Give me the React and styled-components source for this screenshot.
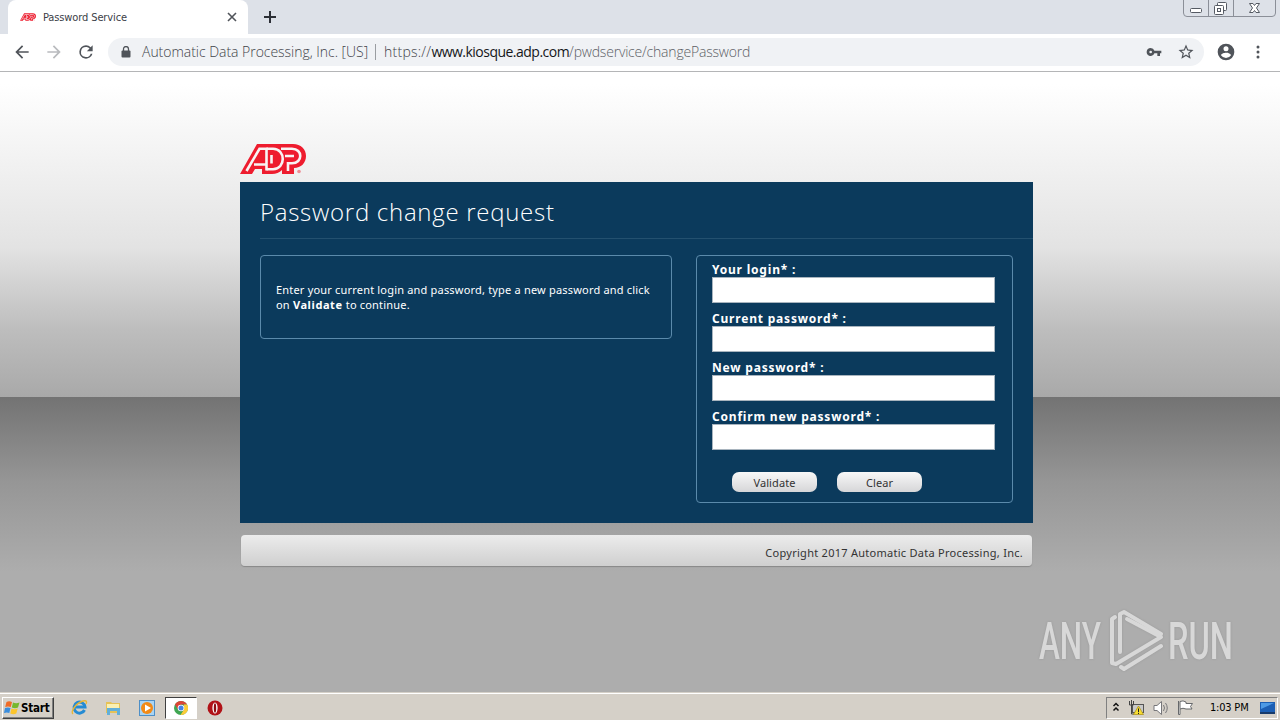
import React, { useState } from "react";
import styled, { createGlobalStyle } from "styled-components";

const GlobalStyle = createGlobalStyle`
  * {
    box-sizing: border-box;
  }
  body {
    margin: 0;
    overflow: hidden;
    font-family: "Noto Sans", "Open Sans", sans-serif;
  }
`;

const AdpLogo = ({ width, height }) => (
  <svg width={width} height={height} viewBox="0 0 66 30" fill="none">
    <path
      d="M17 0H53C61 0 66 5 66 12C66 19 61 24 54 24V30H42V26Q38 30 32 30H22V25H15L12 30H0Z"
      fill="#ee1c2e"
    />
    <g stroke="#f8f4f4" strokeWidth="2.600">
      <path d="M6.500 27L19.500 4.800H26.500V26.500M14 20.500H26.500" />
      <path d="M26.500 4.800H33C46 4.800 46 25.200 33 25.200H26.500" />
      <path d="M31.500 11V19.500" />
      <path d="M41 4.800H52C63 4.800 63 19.200 52 19.200H48V27M45 12H54" />
    </g>
    <circle cx="59" cy="27.500" r="1.800" fill="#ee8d94" />
  </svg>
);

const WindowButtons = () => (
  <svg width="94" height="17" viewBox="0 0 94 17" fill="none">
    <path
      d="M.5 0V13Q.5 16.500 4 16.500H89Q92.500 16.500 92.500 13V0M25.500 0V16M50.500 0V16"
      stroke="#8b8f98"
    />
    <rect x="7.500" y="8.500" width="11" height="4" rx="1" fill="#fff" stroke="#555a63" />
    <rect x="34.500" y="2.500" width="9" height="8" rx="1" fill="#fff" stroke="#555a63" />
    <rect x="31.500" y="5.500" width="9" height="9" rx="1" fill="#fff" stroke="#555a63" />
    <rect x="34.500" y="8.500" width="3" height="3" stroke="#555a63" />
    <path
      d="M66.500 3.500H70L71.500 5.500L73 3.500H76.500L73.500 8L76.500 12.500H73L71.500 10.500L70 12.500H66.500L69.500 8Z"
      fill="#fff"
      stroke="#555a63"
    />
  </svg>
);

const AnyRunMark = () => (
  <svg width="240" height="64" viewBox="0 0 240 64" fill="none">
    <g fill="#d8d8d8" fontFamily="Roboto, sans-serif" fontSize="51" fontWeight="500">
      <text x="1" y="50" textLength="62" lengthAdjust="spacingAndGlyphs">
        ANY
      </text>
      <text x="130" y="50" textLength="65" lengthAdjust="spacingAndGlyphs">
        RUN
      </text>
    </g>
    <g stroke="#d8d8d8" strokeWidth="4" strokeLinejoin="round" strokeLinecap="round">
      <path d="M77 8L74 10V54L78 55L123 28L89 10" />
      <path d="M82 43V5L86 3L123 25" />
      <path d="M83 58L86 60L123 37" />
    </g>
  </svg>
);

const App = () => {
  const [values, setValues] = useState({});
  const handleChange = (e) => {
    setValues({ ...values, [e.target.name]: e.target.value });
  };
  const handleClear = () => {
    setValues({});
  };

  return (
    <Screen>
      <GlobalStyle />
      <TabStrip>
        <Tab>
          <AdpLogo width={16} height={8} />
          <TabTitle>Password Service</TabTitle>
          <svg width="10" height="10" viewBox="0 0 10 10">
            <path d="M1 1L9 9M9 1L1 9" stroke="#50545a" strokeWidth="1.600" />
          </svg>
        </Tab>
        <NewTab>
          <svg width="12" height="12" viewBox="0 0 12 12">
            <path d="M6 0V12M0 6H12" stroke="#2c2f36" strokeWidth="2" />
          </svg>
        </NewTab>
        <WindowButtons />
      </TabStrip>

      <Toolbar>
        <NavIcon viewBox="0 0 24 24" color="#50545a">
          <path d="M20 11H7.830l5.590-5.590L12 4l-8 8 8 8 1.410-1.410L7.830 13H20v-2z" />
        </NavIcon>
        <NavIcon viewBox="0 0 24 24" color="#b9bbbe">
          <path d="M12 4l-1.410 1.410L16.170 11H4v2h12.170l-5.580 5.590L12 20l8-8z" />
        </NavIcon>
        <NavIcon viewBox="0 0 24 24" color="#50545a">
          <path d="M17.650 6.350A7.950 7.950 0 0 0 12 4a8 8 0 1 0 7.730 10h-2.080A6 6 0 1 1 12 6c1.660 0 3.140.690 4.220 1.780L13 11h7V4l-2.350 2.350z" />
        </NavIcon>
        <AddressBar>
          <svg width="10" height="12" viewBox="0 0 10 12">
            <rect x="0.500" y="4.500" width="9" height="7" rx="1" fill="#50545a" />
            <path d="M2.500 5V3a2.500 2.500 0 0 1 5 0V5" fill="none" stroke="#50545a" strokeWidth="1.300" />
          </svg>
          <Owner>Automatic Data Processing, Inc. [US]</Owner>
          <Separator />
          <Url>
            <Scheme>https://</Scheme>
            <Host>www.kiosque.adp.com</Host>
            <Path>/pwdservice/changePassword</Path>
          </Url>
          <svg width="16" height="16" viewBox="0 0 24 24" fill="#50545a">
            <path d="M12.650 10A5.990 5.990 0 0 0 7 6a6 6 0 1 0 5.650 8H17v4h4v-4h2v-4H12.650zM7 14a2 2 0 1 1 0-4 2 2 0 0 1 0 4z" />
          </svg>
          <svg width="18" height="18" viewBox="0 0 24 24" fill="#50545a">
            <path d="M22 9.240l-7.190-.620L12 2 9.190 8.630 2 9.240l5.460 4.730L5.820 21 12 17.270 18.180 21l-1.630-7.030L22 9.240zM12 15.400l-3.760 2.270 1-4.280-3.320-2.880 4.380-.380L12 6.100l1.710 4.040 4.380.380-3.320 2.880 1 4.280L12 15.400z" />
          </svg>
        </AddressBar>
        <svg width="20" height="20" viewBox="0 0 24 24" fill="#50545a">
          <path d="M12 2a10 10 0 1 0 0 20 10 10 0 0 0 0-20zm0 3a3 3 0 1 1 0 6 3 3 0 0 1 0-6zm0 14.200a7.200 7.200 0 0 1-6-3.220c.030-1.990 4-3.080 6-3.080s5.970 1.090 6 3.080a7.200 7.200 0 0 1-6 3.220z" />
        </svg>
        <svg width="4" height="14" viewBox="0 0 4 14" fill="#50545a">
          <circle cx="2" cy="2" r="1.500" />
          <circle cx="2" cy="7" r="1.500" />
          <circle cx="2" cy="12" r="1.500" />
        </svg>
      </Toolbar>

      <Page>
        <Content>
          <AdpLogo width={66} height={30} />
          <Panel>
            <Title>Password change request</Title>
            <Columns>
              <Instructions>
                Enter your current login and password, type a new password and click
                <br />
                on <b>Validate</b> to continue.
              </Instructions>
              <Form>
                <Label>
                  Your login* :
                  <Input name="login" value={values.login || ""} onChange={handleChange} />
                </Label>
                <Label>
                  Current password* :
                  <Input
                    name="current"
                    type="password"
                    value={values.current || ""}
                    onChange={handleChange}
                  />
                </Label>
                <Label>
                  New password* :
                  <Input
                    name="next"
                    type="password"
                    value={values.next || ""}
                    onChange={handleChange}
                  />
                </Label>
                <Label>
                  Confirm new password* :
                  <Input
                    name="confirm"
                    type="password"
                    value={values.confirm || ""}
                    onChange={handleChange}
                  />
                </Label>
                <Actions>
                  <Button type="button">Validate</Button>
                  <Button type="button" onClick={handleClear}>
                    Clear
                  </Button>
                </Actions>
              </Form>
            </Columns>
          </Panel>
          <Footer>Copyright 2017 Automatic Data Processing, Inc.</Footer>
        </Content>
        <Watermark>
          <AnyRunMark />
        </Watermark>
      </Page>

      <Taskbar>
        <StartButton>
          <svg width="16" height="16" viewBox="0 0 16 16">
            <path d="M2.500 2Q5 .500 8 2L6.800 7Q4 5.800 1.200 7Z" fill="#ef6b27" />
            <path d="M9 2.500Q12 4 15.500 2.500L14 7.500Q11 9 7.800 7.500Z" fill="#76b82e" />
            <path d="M1 8Q4 6.800 6.500 8L5.300 13Q3 11.800 0 13Z" fill="#3a8ddd" />
            <path d="M7.500 8.500Q10.500 10 13.700 8.500L12.300 13.500Q9.500 15 6.300 13.500Z" fill="#fcc52c" />
          </svg>
          Start
        </StartButton>
        <QuickLaunch>
          <svg width="17" height="17" viewBox="0 0 17 17" fill="none">
            <path d="M13.500 11A5.500 5.500 0 1 1 14 8H4" stroke="#258bd3" strokeWidth="3" />
            <path d="M2 15C-1 13 5 4 12 2C16 1 16 3 15 5" stroke="#e8b636" strokeWidth="1.400" />
          </svg>
        </QuickLaunch>
        <QuickLaunch>
          <svg width="17" height="16" viewBox="0 0 17 16">
            <path d="M1 2H6L7 3H15V13H1Z" fill="#e6c257" />
            <path d="M2 4H14V8H2Z" fill="#faf0b2" />
            <path d="M2 8H15V15H12V11H5V15H2Z" fill="#62afd9" />
          </svg>
        </QuickLaunch>
        <QuickLaunch>
          <svg width="16" height="16" viewBox="0 0 16 16">
            <rect x=".5" y=".5" width="15" height="15" fill="#a9d4f3" stroke="#4e8fc7" />
            <circle cx="8" cy="8" r="6" fill="#f28a16" />
            <path d="M6 4.500L12 8L6 11.500Z" fill="#fff" />
          </svg>
        </QuickLaunch>
        <QuickLaunch $active>
          <svg width="14" height="14" viewBox="0 0 14 14">
            <circle cx="7" cy="7" r="7" fill="#3fa652" />
            <path d="M1 3.500A7 7 0 0 1 13.100 3.500H7L4 8.500Z" fill="#dc4436" />
            <path d="M13.100 3.500A7 7 0 0 1 6.500 14L10 8.500V3.500Z" fill="#fccb38" />
            <circle cx="7" cy="7" r="3.300" fill="#fff" />
            <circle cx="7" cy="7" r="2.500" fill="#4482e5" />
          </svg>
        </QuickLaunch>
        <QuickLaunch>
          <svg width="16" height="16" viewBox="0 0 16 16">
            <circle cx="8" cy="8" r="7.500" fill="#b11217" />
            <ellipse cx="8" cy="8" rx="2.600" ry="5.500" fill="#fff" />
            <ellipse cx="8" cy="8" rx="1.200" ry="4.800" fill="#8d0c10" />
          </svg>
        </QuickLaunch>
        <Tray>
          <svg width="8" height="11" viewBox="0 0 8 11" fill="none">
            <path d="M1.500 4L4 1.500L6.500 4M1.500 8.500L4 6L6.500 8.500" stroke="#111" strokeWidth="1.500" />
          </svg>
          <svg width="17" height="16" viewBox="0 0 17 16">
            <rect x="4.500" y="4.500" width="11" height="8" fill="#c9c9c9" stroke="#555" />
            <path d="M1.500 1V5H5.500V1M3.500 0V14H6" fill="none" stroke="#444" />
            <path d="M10.500 6L15.500 14.500H5.500Z" fill="#f7dd31" stroke="#a78b13" strokeWidth=".7" />
            <path d="M10.500 8.500V12M10.500 12.800V14" stroke="#222" />
          </svg>
          <svg width="17" height="16" viewBox="0 0 17 16" fill="none" stroke="#77777a">
            <path d="M1 5.500H4L8.500 1.500V14.500L4 10.500H1Z" fill="#fff" />
            <path d="M10.500 5Q12.500 8 10.500 11M12.500 3Q16 8 12.500 13" />
          </svg>
          <svg width="17" height="16" viewBox="0 0 17 16" stroke="#66686b">
            <path d="M.5 1V14.500H2V9" fill="#fff" />
            <path d="M2 1.500Q5 0 8 2V3.500H14.500L12.500 6.500L14 9H8Q5 7.500 2 9Z" fill="#fff" />
          </svg>
          <Clock>1:03 PM</Clock>
          <svg width="15" height="14" viewBox="0 0 15 14">
            <path d="M0 1H15V11H0Z" fill="#1c5fb4" />
            <path d="M1 2H14L1 8Z" fill="#4d9ae5" />
            <path d="M0 11H15V13H0Z" fill="#183b6b" />
          </svg>
        </Tray>
      </Taskbar>
    </Screen>
  );
};

export default App;

const Screen = styled.div`
  display: flex;
  flex-direction: column;
  width: 1280px;
  height: 720px;
  overflow: hidden;
`;

const TabStrip = styled.div`
  display: flex;
  align-items: flex-start;
  height: 34px;
  padding: 0 3px 0 8px;
  background: #dde1e8;
`;

const Tab = styled.div`
  display: flex;
  align-items: center;
  width: 240px;
  height: 34px;
  padding: 0 11px 0 12px;
  border-radius: 8px 8px 0 0;
  background: #fff;
`;

const TabTitle = styled.span`
  flex: 1;
  margin-left: 7px;
  font-family: "DejaVu Sans Condensed", "DejaVu Sans", sans-serif;
  font-size: 11px;
  letter-spacing: -0.12px;
  color: #3c4047;
`;

const NewTab = styled.div`
  display: flex;
  flex: 1;
  align-items: center;
  height: 34px;
  padding-left: 16px;
`;

const Toolbar = styled.div`
  display: flex;
  align-items: center;
  height: 38px;
  padding: 0 20px 2px 12px;
  border-bottom: 1px solid #b4b5b7;
  background: #fff;

  > svg:last-child {
    margin-left: 20px;
  }
`;

const NavIcon = styled.svg`
  width: 20px;
  height: 20px;
  margin-right: 12px;
  fill: ${(props) => props.color};
`;

const AddressBar = styled.div`
  display: flex;
  flex: 1;
  align-items: center;
  height: 28px;
  margin-right: 12px;
  padding: 0 9px 0 13px;
  border-radius: 14px;
  background: #f0f2f5;
  font-family: "Open Sans", "Noto Sans", sans-serif;
  font-size: 14px;
  font-weight: 300;
  white-space: nowrap;
  color: #3f4349;

  > svg:last-child {
    margin-left: 15px;
  }
`;

const Owner = styled.span`
  width: 233px;
  margin-left: 11px;
  letter-spacing: -0.03px;
`;

const Separator = styled.span`
  width: 1px;
  height: 16px;
  margin-right: 8px;
  background: #9a9da1;
`;

const Url = styled.div`
  flex: 1;
`;

const Scheme = styled.span`
  letter-spacing: 0.25px;
`;

const Host = styled.span`
  font-weight: 400;
  letter-spacing: -0.52px;
  color: #15171a;
`;

const Path = styled.span`
  letter-spacing: -0.2px;
  color: #5c6065;
`;

const Page = styled.main`
  position: relative;
  height: 620px;
  padding: 72px 0 0 240px;
  background: linear-gradient(
    #fff 0,
    #fff 12px,
    #e3e3e3 175px,
    #bdbdbd 258px,
    #a9a9a9 325px,
    #737373 325px,
    #969696 410px,
    #adadad 500px
  );
`;

const Content = styled.div`
  display: flex;
  flex-direction: column;
  align-items: flex-start;
  width: 793px;
`;

const Panel = styled.section`
  width: 793px;
  height: 341px;
  margin-top: 8px;
  padding-left: 20px;
  background: #0b3a5c;
  color: #fff;
`;

const Title = styled.h1`
  height: 57px;
  margin: 0 0 16px;
  padding-top: 12px;
  border-bottom: 1px solid #23506f;
  font-family: "Open Sans", "Noto Sans", sans-serif;
  font-size: 24px;
  font-weight: 300;
  line-height: 36px;
  letter-spacing: 0.72px;
  white-space: nowrap;
`;

const Columns = styled.div`
  display: flex;
  align-items: flex-start;
  gap: 24px;
`;

const Instructions = styled.div`
  width: 412px;
  height: 84px;
  padding: 26px 0 0 15px;
  border: 1px solid #5b8aab;
  border-radius: 4px;
  font-size: 11px;
  line-height: 15px;
  letter-spacing: 0.19px;
  white-space: nowrap;

  b {
    letter-spacing: 0.6px;
  }
`;

const Form = styled.form`
  width: 317px;
  height: 248px;
  padding: 6px 15px 0;
  border: 1px solid #5b8aab;
  border-radius: 4px;
`;

const Label = styled.label`
  display: block;
  height: 49px;
  font-size: 12px;
  font-weight: 700;
  line-height: 15px;
  letter-spacing: 0.8px;
`;

const Input = styled.input`
  display: block;
  width: 283px;
  height: 26px;
  border: 1px solid #a8b4be;
  background: #fff;
`;

const Actions = styled.div`
  display: flex;
  gap: 20px;
  padding: 14px 0 0 20px;
`;

const Button = styled.button`
  width: 85px;
  height: 20px;
  padding: 1px 0 0;
  border: 0;
  border-radius: 7px;
  background: linear-gradient(#f8f8f8, #d6d6d8);
  font-family: "Noto Sans", sans-serif;
  font-size: 11px;
  line-height: 19px;
  letter-spacing: 0.1px;
  color: #333;
`;

const Footer = styled.footer`
  width: 791px;
  height: 31px;
  margin: 12px 0 0 1px;
  padding-right: 9px;
  border-radius: 4px;
  background: linear-gradient(#ececec, #cfcfcf);
  box-shadow: 0 1px 1px #888;
  font-size: 11px;
  line-height: 36px;
  letter-spacing: 0.27px;
  text-align: right;
  color: #333;
`;

const Watermark = styled.div`
  position: absolute;
  top: 537px;
  left: 1038px;
  filter: drop-shadow(0 0 1px #999);
`;

const Taskbar = styled.div`
  display: flex;
  align-items: center;
  height: 28px;
  padding: 2px 2px 0;
  border-top: 1px solid #d5d0c8;
  background: #d5d0c8;
  box-shadow: inset 0 1px 0 #fff;
`;

const StartButton = styled.div`
  display: flex;
  align-items: center;
  gap: 1px;
  width: 52px;
  height: 22px;
  margin-right: 9px;
  padding-left: 1px;
  border: 1px solid;
  border-color: #fff #404040 #404040 #fff;
  box-shadow: inset -1px -1px 0 #808080;
  font-family: "DejaVu Sans Condensed", sans-serif;
  font-size: 11.5px;
  font-weight: 700;
  letter-spacing: -0.2px;
  color: #000;
`;

const QuickLaunch = styled.div`
  display: flex;
  align-items: center;
  justify-content: center;
  width: 32px;
  height: 22px;
  margin-right: 2px;
  border: 1px solid;
  border-color: ${(props) => (props.$active ? "#404040 #fff #fff #404040" : "transparent")};
  background: ${(props) => (props.$active ? "#fff" : "transparent")};
`;

const Tray = styled.div`
  display: flex;
  align-items: center;
  gap: 8px;
  width: 172px;
  height: 22px;
  margin-left: auto;
  padding: 0 2px 0 5px;
  border: 1px solid;
  border-color: #808080 #fff #fff #808080;
`;

const Clock = styled.span`
  flex: 1;
  margin-left: 7px;
  font-family: "DejaVu Sans Condensed", sans-serif;
  font-size: 11px;
  letter-spacing: -0.2px;
  white-space: nowrap;
  color: #000;
`;
